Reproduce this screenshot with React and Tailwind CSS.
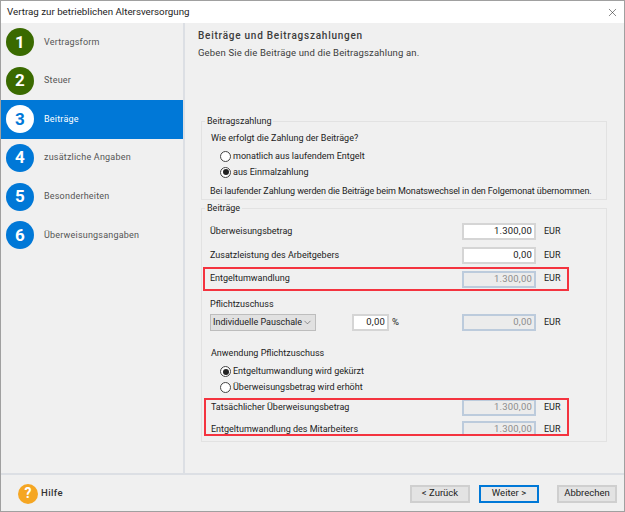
import React from "react";
import { X, ChevronDown } from "lucide-react";

const steps = [
  { n: 1, label: "Vertragsform", state: "done" },
  { n: 2, label: "Steuer", state: "done" },
  { n: 3, label: "Beiträge", state: "active" },
  { n: 4, label: "zusätzliche Angaben", state: "open" },
  { n: 5, label: "Besonderheiten", state: "open" },
  { n: 6, label: "Überweisungsangaben", state: "open" },
];

function Step({ n, label, state }) {
  const active = state === "active";
  const circle = active
    ? "bg-white text-[#0078d7]"
    : state === "done"
    ? "bg-[#3a6a00] text-white"
    : "bg-[#0078d7] text-white";
  return (
    <div className={`flex items-center h-[38.6px] pl-[5px] ${active ? "bg-[#0078d7]" : ""}`}>
      <div className={`w-[28px] h-[28px] rounded-full flex items-center justify-center text-[17px] font-bold ${circle}`}>{n}</div>
      <span className={`ml-[10px] text-[9px] tracking-[0.2px] ${active ? "text-white" : "text-[#555555]"}`}>{label}</span>
    </div>
  );
}

function Radio({ checked, children }) {
  return (
    <div className="flex items-center h-[15.5px] text-[9px] text-[#222222]">
      <span className="w-[11px] h-[11px] rounded-full border border-[#444444] bg-white flex items-center justify-center mr-[2px]">
        {checked && <span className="w-[6px] h-[6px] rounded-full bg-[#222222]" />}
      </span>
      {children}
    </div>
  );
}

function Amount({ value, disabled, className = "" }) {
  return (
    <div
      className={`w-[74px] h-[17px] shrink-0 flex items-center justify-end pr-[2px] text-[9.5px] tracking-[0.2px] border-2 ${
        disabled ? "bg-[#ececec] border-[#bccbdc] text-[#8d8d8d]" : "bg-white border-[#d5d5d5] text-[#222222]"
      } ${className}`}
    >
      {value}
    </div>
  );
}

function Eur() {
  return <span className="ml-[8px] text-[9px] text-[#222222]">EUR</span>;
}

function Row({ label, value, disabled, labelWidth = "w-[252px]", className = "" }) {
  return (
    <div className={`flex items-center h-[17px] ${className}`}>
      <span className={`${labelWidth} text-[9px] text-[#222222]`}>{label}</span>
      <Amount value={value} disabled={disabled} />
      <Eur />
    </div>
  );
}

function Button({ children, primary }) {
  return (
    <button
      className={`w-[60px] h-[18px] shrink-0 flex items-center justify-center text-[9.5px] text-[#222222] ${
        primary ? "border-2 border-[#0078d7] bg-[#e9e9e9]" : "border-2 border-[#cfcfcf] bg-[#e3e3e3]"
      }`}
    >
      {children}
    </button>
  );
}

export default function App() {
  return (
    <div
      className="w-[625px] h-[512px] flex flex-col border border-[#a0a0a0] bg-[#f0f0f0] overflow-hidden"
      style={{ fontFamily: 'Roboto, "Liberation Sans", sans-serif' }}
    >
      <div className="h-[22px] shrink-0 bg-white flex items-center justify-between pl-[6px] pr-[5px]">
        <span className="text-[9.75px] text-[#222222]">Vertrag zur betrieblichen Altersversorgung</span>
        <X size={13} strokeWidth={1} className="text-[#222222]" />
      </div>

      <div className="flex flex-1 min-h-0">
        <div className="w-[184px] shrink-0 border-r-2 border-[#dcdfe4]">
          {steps.map((s) => (
            <Step key={s.n} {...s} />
          ))}
        </div>

        <div className="flex-1 min-w-0 pl-[13px] pt-[6px]">
          <div className="text-[10px] font-medium text-[#3c3c3c] tracking-[0.75px] h-[14px] leading-[14px]">Beiträge und Beitragszahlungen</div>
          <div className="text-[9.5px] text-[#3c3c3c] tracking-[0.15px] mt-[3px] h-[13px] leading-[13px]">Geben Sie die Beiträge und die Beitragszahlung an.</div>

          <fieldset className="ml-[3px] mt-[55px] w-[406px] h-[86px] border border-[#e2e2e2]">
            <legend className="ml-[3px] px-[2px] text-[9px] leading-[14px] text-[#222222]">Beitragszahlung</legend>
            <div className="ml-[9px] mt-[3px] h-[14px] leading-[14px] text-[9px] text-[#222222]">Wie erfolgt die Zahlung der Beiträge?</div>
            <div className="ml-[18px] mt-[4px]">
              <Radio>monatlich aus laufendem Entgelt</Radio>
              <Radio checked>aus Einmalzahlung</Radio>
            </div>
            <div className="ml-[8px] mt-[4px] h-[14px] leading-[14px] text-[9px] tracking-[-0.1px] text-[#222222] whitespace-nowrap">
              Bei laufender Zahlung werden die Beiträge beim Monatswechsel in den Folgemonat übernommen.
            </div>
          </fieldset>

          <fieldset className="ml-[3px] mt-[1px] w-[406px] h-[241px] border border-[#e2e2e2]">
            <legend className="ml-[3px] px-[2px] text-[9px] leading-[14px] text-[#222222]">Beiträge</legend>
            <Row label="Überweisungsbetrag" value="1.300,00" className="ml-[8px] mt-[8px]" />
            <Row label="Zusatzleistung des Arbeitgebers" value="0,00" className="ml-[8px] mt-[7px]" />

            <div className="ml-[1px] mt-[3px] w-[366px] h-[24px] border-2 border-[#f4333f] pl-[5px] flex items-center">
              <Row label="Entgeltumwandlung" value="1.300,00" disabled />
            </div>

            <div className="ml-[8px] mt-[6px] h-[14px] leading-[14px] text-[9px] text-[#222222]">Pflichtzuschuss</div>
            <div className="ml-[8px] mt-[3px] flex items-center h-[17px]">
              <div className="w-[106px] h-[17px] shrink-0 bg-[#e1e1e1] border border-[#bdbdbd] flex items-center justify-between pl-[2px] pr-[2px] text-[9px] text-[#222222] whitespace-nowrap">
                Individuelle Pauschale
                <ChevronDown size={11} strokeWidth={1} />
              </div>
              <Amount value="0,00" className="ml-[36px] !w-[37px]" />
              <span className="ml-[3px] w-[70px] text-[9.5px] text-[#222222]">%</span>
              <Amount value="0,00" disabled />
              <Eur />
            </div>

            <div className="ml-[9px] mt-[15px] h-[14px] leading-[14px] text-[9px] text-[#222222]">Anwendung Pflichtzuschuss</div>
            <div className="ml-[18px] mt-[4px]">
              <Radio checked>Entgeltumwandlung wird gekürzt</Radio>
              <Radio>Überweisungsbetrag wird erhöht</Radio>
            </div>

            <div className="ml-[2px] mt-[3px] w-[365px] h-[38px] border-2 border-[#f4333f] pl-[5px] flex flex-col gap-[5px] overflow-hidden">
              <Row label="Tatsächlicher Überweisungsbetrag" value="1.300,00" disabled labelWidth="w-[251px]" className="-mt-[1px] shrink-0" />
              <Row label="Entgeltumwandlung des Mitarbeiters" value="1.300,00" disabled labelWidth="w-[251px]" className="shrink-0" />
            </div>
          </fieldset>
        </div>
      </div>

      <div className="h-[38px] shrink-0 border-t-2 border-[#dcdfe4] flex items-center pl-[17px] pr-[7px] pt-[1px]">
        <div className="w-[20px] h-[20px] rounded-full bg-[#f5a623] text-white flex items-center justify-center text-[14px] font-bold">?</div>
        <span className="ml-[3px] text-[9.5px] font-medium text-[#333333] tracking-[0.4px]">Hilfe</span>
        <div className="ml-auto flex">
          <Button>{"< Zurück"}</Button>
          <div className="ml-[9px]"><Button primary>{"Weiter >"}</Button></div>
          <div className="ml-[18px]"><Button>Abbrechen</Button></div>
        </div>
      </div>
    </div>
  );
}
